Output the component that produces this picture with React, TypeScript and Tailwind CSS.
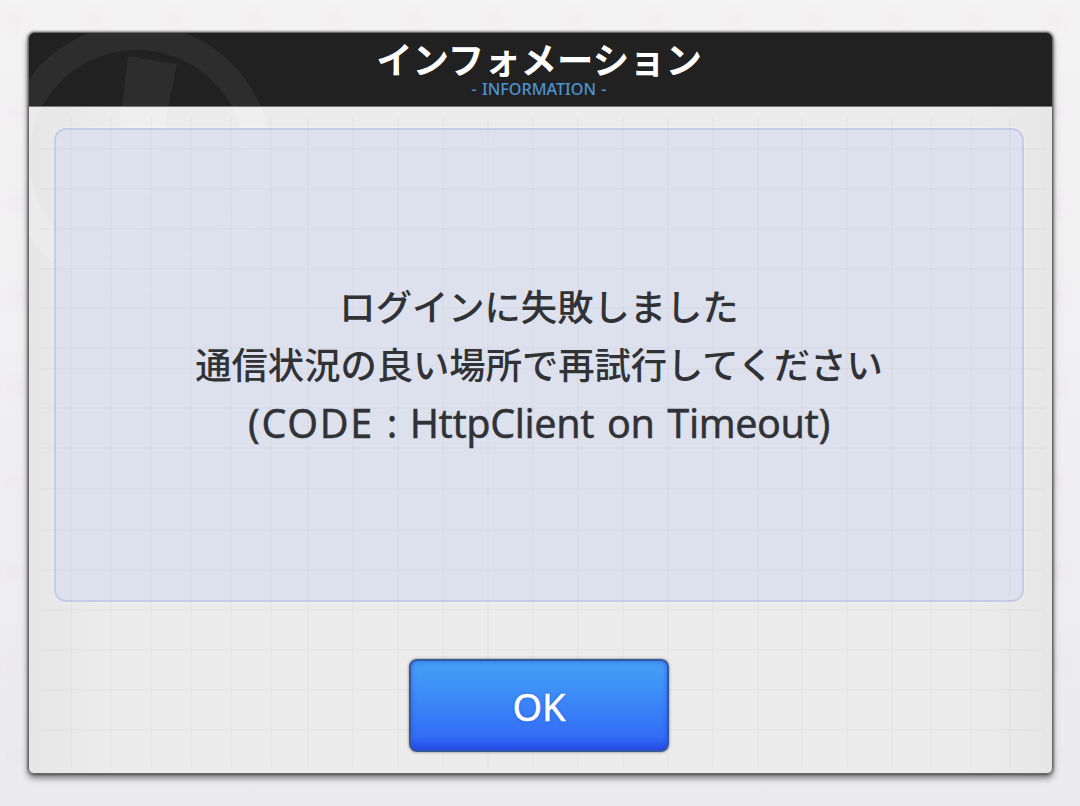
import React, { useState } from "react";

const gridX = [71, 111, 151, 191, 231, 271, 308, 353, 398, 443, 488, 533, 578, 623, 668, 713, 758, 802, 847, 892, 931, 971, 1010];
const gridY = [149, 189, 229, 269, 308, 348, 369, 408, 448, 489, 530, 570, 610, 650, 690, 730];

// Faint graph paper, drawn over the whole dialog body
const PaperGrid = () => (
  <svg className="pointer-events-none absolute inset-0 h-full w-full" viewBox="29 33 1023 740" preserveAspectRatio="none">
    <g stroke="#777" strokeOpacity="0.045" strokeWidth="1.5">
      {gridX.map((x) => (
        <line key={x} x1={x} x2={x} y1="118" y2="767" />
      ))}
      {gridY.map((y) => (
        <line key={y} x1="39" x2="1046" y1={y} y2={y} />
      ))}
    </g>
  </svg>
);

// Round "!" emblem, tinted for the surface it sits on
const Emblem = ({ className }: { className: string }) => (
  <svg className={`pointer-events-none absolute left-0 top-0 ${className}`} width="260" height="290" viewBox="29 33 260 290">
    <circle cx="137" cy="158" r="121" fill="none" stroke="currentColor" strokeWidth="26" />
    <path d="M128 56 L177 64 L150 195 L112 195 Z" fill="currentColor" />
    <circle cx="122" cy="238" r="21" fill="currentColor" />
  </svg>
);

const App = () => {
  const [open, setOpen] = useState(true);

  return (
    <main className="flex h-[806px] w-[1080px] items-start overflow-hidden bg-[radial-gradient(circle_at_15px_20px,rgba(225,205,225,0.12),transparent_18px),linear-gradient(#f4f3f3,#ebebef)] bg-[size:80px_92px,100%_100%] pl-[28px] pt-[32px] font-['Noto_Sans','Noto_Sans_CJK_JP',sans-serif]">
      {open && (
        <section className="relative flex h-[742px] w-[1025px] flex-col rounded-[6px] border border-[#6a6a6a] bg-[linear-gradient(90deg,#e6e6e6,#ececec_8%,#ececec_92%,#e6e6e6)] shadow-[0_0_2px_1px_rgba(0,0,0,0.35),0_4px_6px_rgba(0,0,0,0.5)]">
          <Emblem className="text-white/20" />
          <header className="relative flex h-[74px] shrink-0 flex-col items-center overflow-hidden rounded-t-[5px] border-b border-[#777] bg-[#212121] pr-[3px]">
            <Emblem className="text-[#2d2d2d]" />
            <h1 className="relative mt-[6px] whitespace-nowrap font-['Noto_Sans_CJK_JP',sans-serif] text-[36.4px] font-bold leading-[38px] text-white">
              インフォメーション
            </h1>
            <p className="relative mt-px text-[16.2px] font-medium leading-[22px] text-[#4d93d2] [word-spacing:1px]">- INFORMATION -</p>
          </header>

          <div className="relative ml-[25px] mr-[28px] mt-[21px] flex h-[474px] shrink-0 flex-col items-center rounded-[12px] border-2 border-[#c6cce8] bg-[#dadfee]/85 pt-[146px] text-[#303235] shadow-[0_0_3px_rgba(255,255,255,0.5)]">
            <p className="h-[58px] whitespace-nowrap font-['Noto_Sans_CJK_JP',sans-serif] text-[36.3px] font-medium leading-[58px]">
              ログインに失敗しました
            </p>
            <p className="h-[59px] whitespace-nowrap font-['Noto_Sans_CJK_JP',sans-serif] text-[36.3px] font-medium leading-[59px]">
              通信状況の良い場所で再試行してください
            </p>
            <p className="h-[58px] whitespace-nowrap text-[39.5px] leading-[61px] tracking-[-0.4px] [-webkit-text-stroke:0.4px_#303235] [word-spacing:3px]">
              <span className="mr-[2px]">(</span>
              <span className="tracking-[1.6px]">CODE</span> : HttpClient on Timeout)
            </p>
          </div>
          <PaperGrid />

          <button
            onClick={() => setOpen(false)}
            className="relative ml-[380px] mt-[57px] flex h-[93px] w-[260px] shrink-0 items-center justify-center rounded-[8px] border-2 border-[#34589c] bg-[linear-gradient(#479ff6,#3f91f7_30%,#326df5_85%,#264be8)] pt-[2px] text-[38px] text-white shadow-[0_0_3px_rgba(0,0,0,0.5),inset_0_0_5px_rgba(35,75,220,0.7)] [-webkit-text-stroke:0.5px_#fff] [text-shadow:0_0_3px_#2450d8]"
          >
            OK
          </button>
        </section>
      )}
    </main>
  );
};

export default App;
